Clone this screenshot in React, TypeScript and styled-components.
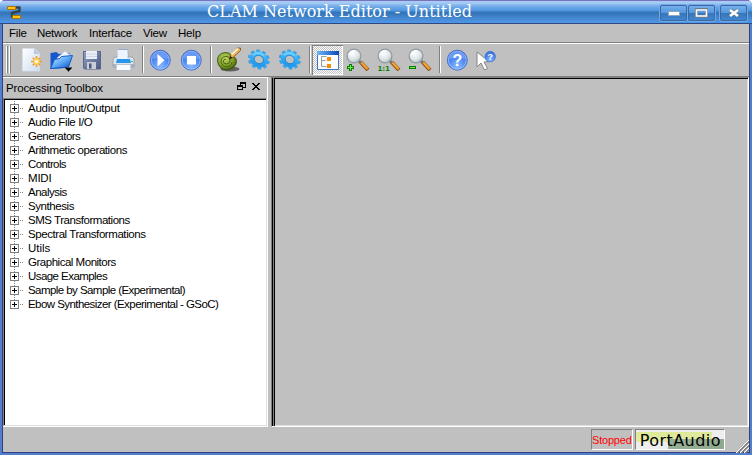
import React from "react";
import styled, { createGlobalStyle } from "styled-components";

const Global = createGlobalStyle`
  * { box-sizing: border-box; }
  html, body { margin: 0; padding: 0; overflow: hidden; background: #fff; }
  svg { display: block; flex: none; }
`;

const Frame = styled.div`
  width: 752px;
  height: 455px;
  display: flex;
  flex-direction: column;
  overflow: hidden;
  background: #5080cc;
  border-radius: 5px 5px 0 0;
  font: 11.5px "Liberation Sans", Arial, sans-serif;
  color: #000;
`;

const TitleBar = styled.header`
  display: flex;
  align-items: flex-start;
  height: 24px;
  flex: none;
  padding: 4px 5px 0 7px;
  border-top: 1px solid #7774bd;
  border-bottom: 1px solid #30477f;
  background: linear-gradient(#a8c9f4 0, #a5cbf5 2px, #78aee9 5px, #4b94df 10px, #3474b7 11px, #3778bb 13px, #478bd5 18px, #4d97e9 22px);
`;

const Title = styled.h1`
  flex: 1;
  margin: -4px 0 0 185px;
  font: 16px/22px "DejaVu Serif", serif;
  letter-spacing: 0.02px;
  color: #fff;
  white-space: pre;
`;

const WindowButton = styled.button<{ $gap?: number }>`
  width: 27px;
  height: 16px;
  padding: 0;
  margin-left: ${(p) => p.$gap ?? 1}px;
  border: 1px solid #376aa5;
  border-radius: 2px;
  background: linear-gradient(#75aeea 0, #5598df 48%, #3675b8 50%, #4286d0);
  box-shadow: 0 0 0 1px #70a9e6;
`;

const Body = styled.div`
  flex: 1;
  min-height: 0;
  display: flex;
  flex-direction: column;
  margin: 0 2px 2px 2px;
  border: 1px solid #373f82;
  border-top: 0;
  background: #c0c0c0;
`;

const MenuBar = styled.nav`
  height: 19px;
  flex: none;
  display: flex;
  padding-left: 6px;
  border-bottom: 1px solid #808080;
`;

const MenuItem = styled.span<{ $w: number; $track?: number }>`
  width: ${(p) => p.$w}px;
  line-height: 18px;
  letter-spacing: ${(p) => p.$track ?? 0}px;
  white-space: pre;
`;

const ToolBar = styled.div`
  height: 34px;
  flex: none;
  display: flex;
  border-top: 1px solid #fff;
  border-bottom: 1px solid #808080;
`;

const Handle = styled.div`
  width: 12px;
  height: 27px;
  margin-top: 2px;
  padding-left: 3px;
  display: flex;
  gap: 1px;
  i { width: 2px; border-left: 1px solid #fff; border-right: 1px solid #808080; }
`;

const Tool = styled.div<{ $on?: boolean }>`
  width: 31px;
  height: 30px;
  margin-top: 1px;
  ${(p) =>
    p.$on &&
    `background: repeating-conic-gradient(#c0c0c0 0 25%, #fff 0 50%) 0 0 / 2px 2px;
     box-shadow: inset 1px 1px #808080, inset -1px -1px #fff;`}
`;

const Separator = styled.div`
  width: 2px;
  height: 27px;
  margin: 2px 1px 0 3px;
  border-left: 1px solid #808080;
  border-right: 1px solid #fff;
`;

const Main = styled.main`
  height: 350px;
  flex: none;
  display: flex;
`;

const Dock = styled.section`
  width: 265px;
  height: 350px;
  display: flex;
  flex-direction: column;
  border-right: 1px solid #fff;
`;

const DockTitle = styled.div`
  display: flex;
  height: 21px;
  flex: none;
  padding-left: 3px;
  border-top: 1px solid #fff;
  line-height: 21px;
  letter-spacing: -0.15px;
  span { flex: 1; }
`;

const Tree = styled.ul`
  flex: 1;
  margin: 0 0 1px;
  padding: 2px 0 0 5px;
  list-style: none;
  background: #fff;
  border: 1px solid;
  border-color: #808080 #dfdfdf #dfdfdf #808080;
  box-shadow: inset 1px 1px #000, 0 1px #fff;
`;

const Row = styled.li<{ $track: number }>`
  height: 14px;
  display: flex;
  line-height: 14px;
  letter-spacing: ${(p) => p.$track}px;
  white-space: pre;
  svg { margin-right: 3px; }
`;

const Splitter = styled.div`
  width: 3px;
  flex: none;
`;

const Canvas = styled.section`
  flex: 1;
  border: 1px solid;
  border-color: #808080 #fff #fff #808080;
  box-shadow: inset 1px 0 #000, inset 2px 0 #808080, inset 3px 1px #000, inset -1px -1px #dfdfdf;
`;

const StatusBar = styled.footer`
  flex: 1;
  display: flex;
  padding: 2px 0 0 588px;
`;

const Status = styled.div`
  width: 42px;
  height: 21px;
  border: 1px solid;
  border-color: #808080 #fff #fff #808080;
  color: #f00;
  font-size: 11px;
  line-height: 20px;
  letter-spacing: -0.2px;
  white-space: nowrap;
`;

const Backend = styled.div`
  width: 91px;
  height: 21px;
  margin: 0 10px 0 2px;
  border: 1px solid;
  border-color: #808080 #fff #fff #808080;
  padding-left: 4px;
  background:
    linear-gradient(90deg, #97b096, #8fa98d) 32px 9px / 56px 10px no-repeat,
    linear-gradient(#dde997, #e5eba7) 0 2px / 76px 10px no-repeat,
    #eeeeee;
  font: 16px/21px "DejaVu Sans", sans-serif;
  letter-spacing: 0.45px;
  white-space: nowrap;
`;

const Grip = styled.div`
  margin-top: 10px;
`;

const DefsHolder = styled.div`
  height: 0;
  overflow: hidden;
`;

const Defs = () => (
  <svg width="0" height="0">
    <defs>
      <radialGradient id="blue" cx=".5" cy=".8" r=".8">
        <stop offset="0" stopColor="#8ab9ff" /><stop offset=".55" stopColor="#4c88f3" /><stop offset="1" stopColor="#3568d8" />
      </radialGradient>
      <linearGradient id="page" x2="1" y2="1">
        <stop stopColor="#fff" /><stop offset="1" stopColor="#cbdcf0" />
      </linearGradient>
      <linearGradient id="folder" x2="1" y2="1">
        <stop stopColor="#d5efff" /><stop offset=".5" stopColor="#5dabf6" /><stop offset="1" stopColor="#0947bd" />
      </linearGradient>
      <linearGradient id="disk" x2="1" y2="1">
        <stop stopColor="#94a3c2" /><stop offset="1" stopColor="#4b5781" />
      </linearGradient>
      <radialGradient id="glass" cx=".4" cy=".3" r=".75">
        <stop stopColor="#fff" /><stop offset=".6" stopColor="#dbe5e8" /><stop offset="1" stopColor="#adb9bd" />
      </radialGradient>
      <radialGradient id="green" cx=".4" cy=".35" r=".7">
        <stop stopColor="#c3d86a" /><stop offset=".6" stopColor="#7f9f28" /><stop offset="1" stopColor="#3c560a" />
      </radialGradient>
      <linearGradient id="gear" x2=".3" y2="1">
        <stop stopColor="#58c6ff" /><stop offset=".5" stopColor="#36adfa" /><stop offset="1" stopColor="#2599ec" />
      </linearGradient>
      <linearGradient id="win" x2="1">
        <stop stopColor="#71b5f5" /><stop offset="1" stopColor="#0648bd" />
      </linearGradient>
    </defs>
  </svg>
);

const Art = ({ children }: { children: React.ReactNode }) => (
  <svg width="31" height="30" viewBox="0 0 31 30">{children}</svg>
);

const NewIcon = () => (
  <Art>
    <path d="M7.5 3.5h12l5 5v17.500h-17z" fill="url(#page)" stroke="#d5dfef" strokeWidth=".7" />
    <path d="M19 3.500v5.500h5.500z" fill="#b9cbe3" />
    <path d="M21.500 11v11M16 16.500h11M17.800 12.800l7.400 7.400M25.200 12.800l-7.400 7.400" stroke="#f19b22" strokeWidth="1.600" />
    <circle cx="21.500" cy="16.500" r="3" fill="#ffd04f" />
    <circle cx="21.500" cy="16.500" r="1.700" fill="#fffbd8" />
  </Art>
);

const OpenIcon = () => (
  <Art>
    <path d="M4.500 8l6-1 2 2 11-1v5l-4 10-15 1z" fill="#1756cb" />
    <path d="M11 13l8-7 5 4v7H11z" fill="#f2f5ff" stroke="#aabce5" strokeWidth=".6" />
    <path d="M4.500 23.500l4-9 5-1 2-2 11-1-4 11.500z" fill="url(#folder)" stroke="#155ac8" />
    <path d="M19 22.500h7v1h-1v1h-1v1h-1v1h-1v-1h-1v-1h-1v-1h-1z" fill="#000" />
  </Art>
);

const SaveIcon = () => (
  <Art>
    <path d="M6.500 6.500h17v17.500h-16l-1-1z" fill="url(#disk)" stroke="#59658b" />
    <path d="M9 6h11v8H9z" fill="#e9eef7" />
    <path d="M9 9h11M9 11.500h11" stroke="#c3cbdc" strokeWidth=".7" />
    <path d="M10 17h9v7h-9z" fill="#c9cdd7" />
    <path d="M12 18.500h2.500v5H12z" fill="#4e5a7f" />
  </Art>
);

const PrintIcon = () => (
  <Art>
    <path d="M10.500 4.500h9l1 11h-11z" fill="#f6faff" stroke="#91a9ce" />
    <path d="M5 15q0-3 3-3h15q3 0 3 3v7H5z" fill="#e0e5ec" stroke="#8e9aad" strokeWidth=".8" />
    <path d="M9.500 5h10v9h-10z" fill="#eef4ff" />
    <path d="M9 14h13l1 4H8z" fill="#2895ef" />
    <path d="M4.800 19h3v4h-3zM23 19h3.300v4H23z" fill="#a5afbd" />
    <path d="M8.500 19.500h14l.5 6H8z" fill="#f9fbff" stroke="#a7b0be" strokeWidth=".7" />
    <path d="M23 16.500h2" stroke="#3bc44a" />
  </Art>
);

const Disc = ({ children }: { children: React.ReactNode }) => (
  <Art>
    <circle cx="15.300" cy="15.200" r="10" fill="url(#blue)" stroke="#3b65c5" strokeWidth=".8" />
    <circle cx="15.300" cy="15.200" r="8.900" fill="none" stroke="#a6c7ff" strokeWidth=".8" />
    <path d="M7.300 14q1-7.500 8-7.500t8 7.500q-8-3-16 0z" fill="#8bb5ff" opacity=".55" />
    {children}
  </Art>
);

const ClamIcon = () => (
  <Art>
    <ellipse cx="17" cy="24" rx="9.500" ry="2.600" fill="#222" opacity=".6" />
    <path d="M4.500 16Q4 8.500 12 7.500q5-.5 6 3l5 3q2 6-4 10-6 3-11-.5-3.500-3-3.500-7z" fill="url(#green)" stroke="#334c0b" strokeWidth=".8" />
    <path d="M19 17q-1 4.500-5.500 4.500T8 16.500q0-4.500 4.500-5T17 15.500q0 3.500-3.500 3.500t-3.200-2.800q.2-2.200 2.700-2.200" fill="none" stroke="#49660f" strokeWidth="1" />
    <path d="M16.500 14l1.500-5 6.500-6h3v2.500L20 12.500z" fill="#edb35a" stroke="#76400d" strokeWidth=".7" />
    <path d="M18.500 9.500l6.500-6" stroke="#fff3ca" strokeWidth="1.800" />
    <path d="M16 14.500l1.500-3.500 2 1.700z" fill="#32270c" />
  </Art>
);

const GearIcon = () => (
  <Art>
    <g transform="translate(14.800 14.500)">
      <g transform="rotate(25) scale(1.060 .92)">
        {[0, 36, 72, 108, 144, 180, 216, 252, 288, 324].map((a) => (
          <path key={a} d="M-1.900-6.500l.5-3.700h2.800l.5 3.700z" transform={`rotate(${a + 10})`} fill="#32a9f5" stroke="#1d8cdc" strokeWidth=".4" />
        ))}
        <circle r="6.300" fill="none" stroke="url(#gear)" strokeWidth="4" />
        <circle r="4.400" fill="none" stroke="#187dc7" strokeWidth=".7" />
      </g>
      <path d="M-6-4.500Q-1-8.500 5-4" fill="none" stroke="#7bd8ff" strokeWidth="1.100" />
    </g>
  </Art>
);

const TreeViewIcon = () => (
  <Art>
    <path d="M5.500 6.500h21v18h-21z" fill="#fbfdff" stroke="#3b78cd" />
    <path d="M5 6h22v4H5z" fill="url(#win)" />
    <path d="M14.500 11.500h-5v10h5M9.500 15.500h4" stroke="#9c9c9c" fill="none" />
    <path d="M15 12h4v4h-4zM15 19h4v4h-4z" fill="#f68a0a" />
  </Art>
);

const Magnifier = ({ mark }: { mark: "plus" | "one" | "minus" }) => (
  <Art>
    <path d="M17.500 17l7.500 8" stroke="#995411" strokeWidth="4" />
    <path d="M17.500 16.500l7 7.500" stroke="#f2a638" strokeWidth="2.200" />
    <path d="M15 15l3 3" stroke="#777" strokeWidth="3" />
    <circle cx="11" cy="11" r="6.900" fill="url(#glass)" stroke="#909a9e" strokeWidth="1.200" />
    <path d="M6.500 10q1-4 5-4" fill="none" stroke="#fff" strokeWidth="1.300" />
    {mark === "plus" && (
      <>
        <path d="M7.500 19v7M4 22.500h7" stroke="#087d08" strokeWidth="3" />
        <path d="M7.500 20v5M5 22.500h5" stroke="#77ec4a" />
      </>
    )}
    {mark === "minus" && (
      <>
        <path d="M4 22.500h7" stroke="#087d08" strokeWidth="3" />
        <path d="M5 22.500h5" stroke="#70e73d" />
      </>
    )}
    {mark === "one" && (
      <text x="3.400" y="26" fontFamily="DejaVu Sans" fontSize="7" fontWeight="700" fill="#098409">1:1</text>
    )}
  </Art>
);

const WhatsThisIcon = () => (
  <Art>
    <path d="M4 7v15l4-4 3.500 7 3-1.500-3.500-6.500 5-.5z" fill="#fff" stroke="#858585" />
    <circle cx="17.200" cy="11.600" r="5.300" fill="url(#blue)" stroke="#3c70da" strokeWidth=".6" />
    <text x="17.200" y="15" textAnchor="middle" fontFamily="Liberation Sans" fontSize="9" fontWeight="700" fill="#fff">?</text>
  </Art>
);

const Expander = ({ last }: { last: boolean }) => (
  <svg width="16" height="14" viewBox="0 0 16 14" shapeRendering="crispEdges">
    <path d={last ? "M5.500 0v3" : "M5.500 0v3M5.500 12v2"} stroke="#808080" strokeDasharray="1 1" />
    <path d="M11 7.500h4" stroke="#808080" strokeDasharray="1 1" />
    <path d="M1.500 3.500h8v8h-8z" fill="#fff" stroke="#808080" />
    <path d="M3 7.500h5M5.500 5v5" stroke="#000" />
  </svg>
);

const ITEMS: [label: string, tracking: number][] = [
  ["Audio Input/Output", -0.24],
  ["Audio File I/O", -0.38],
  ["Generators", -0.52],
  ["Arithmetic operations", -0.43],
  ["Controls", -0.6],
  ["MIDI", -0.2],
  ["Analysis", -0.5],
  ["Synthesis", -0.42],
  ["SMS Transformations", -0.46],
  ["Spectral Transformations", -0.43],
  ["Utils", 0],
  ["Graphical Monitors", -0.48],
  ["Usage Examples", -0.56],
  ["Sample by Sample (Experimental)", -0.56],
  ["Ebow Synthesizer (Experimental - GSoC)", -0.56],
];

export default function App() {
  return (
    <Frame>
      <Global />
      <DefsHolder><Defs /></DefsHolder>
      <TitleBar>
        <svg width="15" height="15" viewBox="0 0 15 15">
          <path d="M9 2.500h3.500V6L5 8v3.500h3" fill="none" stroke="#334449" strokeWidth="2.400" strokeLinejoin="round" />
          <path d="M.500 1.500h8v3h-8zM5.500 10.500h8v3h-8z" fill="#ffc51b" stroke="#b17300" />
        </svg>
        <Title>CLAM Network Editor - Untitled</Title>
        <WindowButton aria-label="Minimize">
          <svg width="25" height="14"><rect x="7.500" y="5.500" width="11" height="4" fill="#fff" stroke="#8fa5ba" /></svg>
        </WindowButton>
        <WindowButton aria-label="Maximize">
          <svg width="25" height="14"><path d="M7.500 3.500h10v7h-10z" fill="none" stroke="#687d90" strokeWidth="3" /><path d="M7.500 4h10v6h-10z" fill="none" stroke="#fff" strokeWidth="1.600" /></svg>
        </WindowButton>
        <WindowButton $gap={5} aria-label="Close">
          <svg width="25" height="14"><path d="M9 4l8 6M17 4l-8 6" stroke="#657b90" strokeWidth="4" /><path d="M9 4l8 6M17 4l-8 6" stroke="#fff" strokeWidth="2.500" /></svg>
        </WindowButton>
      </TitleBar>
      <Body>
        <MenuBar>
          <MenuItem $w={28} $track={-0.2}>File</MenuItem>
          <MenuItem $w={52} $track={-0.3}>Network</MenuItem>
          <MenuItem $w={54} $track={-0.2}>Interface</MenuItem>
          <MenuItem $w={35} $track={-0.2}>View</MenuItem>
          <MenuItem $w={30} $track={-0.2}>Help</MenuItem>
        </MenuBar>
        <ToolBar>
          <Handle><i /><i /></Handle>
          <Tool><NewIcon /></Tool>
          <Tool><OpenIcon /></Tool>
          <Tool><SaveIcon /></Tool>
          <Tool><PrintIcon /></Tool>
          <Separator />
          <Tool><Disc><path d="M12.500 9l7 6.200-7 6.300z" fill="#fff" /></Disc></Tool>
          <Tool><Disc><path d="M11 11h9v8.500h-9z" fill="#fff" /></Disc></Tool>
          <Separator />
          <Tool><ClamIcon /></Tool>
          <Tool><GearIcon /></Tool>
          <Tool><GearIcon /></Tool>
          <Separator />
          <Tool $on><TreeViewIcon /></Tool>
          <Tool><Magnifier mark="plus" /></Tool>
          <Tool><Magnifier mark="one" /></Tool>
          <Tool><Magnifier mark="minus" /></Tool>
          <Separator />
          <Tool>
            <Disc><text x="15.300" y="21" textAnchor="middle" fontFamily="Liberation Sans" fontSize="16" fontWeight="700" fill="#fff">?</text></Disc>
          </Tool>
          <Tool><WhatsThisIcon /></Tool>
        </ToolBar>
        <Main>
          <Dock>
            <DockTitle>
              <span>Processing Toolbox</span>
              <svg width="31" height="18" viewBox="0 0 31 18" shapeRendering="crispEdges">
                <path d="M4.500 8V4.500h5v5H7M4 5.500h6M1.500 7.500h5v4h-5zM1 8.500h6" fill="none" stroke="#000" />
                <path d="M16 5h2v1h1v1h2V6h1V5h2v1h-1v1h-1v1h-1v1h1v1h1v1h1v1h-2v-1h-1v-1h-2v1h-1v1h-2v-1h1v-1h1V9h1V8h-1V7h-1V6h-1z" fill="#000" />
              </svg>
            </DockTitle>
            <Tree>
              {ITEMS.map(([label, tracking], i) => (
                <Row key={label} $track={tracking}>
                  <Expander last={i === ITEMS.length - 1} />
                  {label}
                </Row>
              ))}
            </Tree>
          </Dock>
          <Splitter />
          <Canvas />
        </Main>
        <StatusBar>
          <Status>Stopped</Status>
          <Backend>PortAudio</Backend>
          <Grip>
            <svg width="14" height="14" viewBox="0 0 14 14">
              <path d="M1 14L14 1M5 14l9-9M9 14l5-5" stroke="#fff" />
              <path d="M2 14L14 2M3 14L14 3M6 14l8-8M7 14l7-7M10 14l4-4M11 14l3-3" stroke="#808080" />
            </svg>
          </Grip>
        </StatusBar>
      </Body>
    </Frame>
  );
}
